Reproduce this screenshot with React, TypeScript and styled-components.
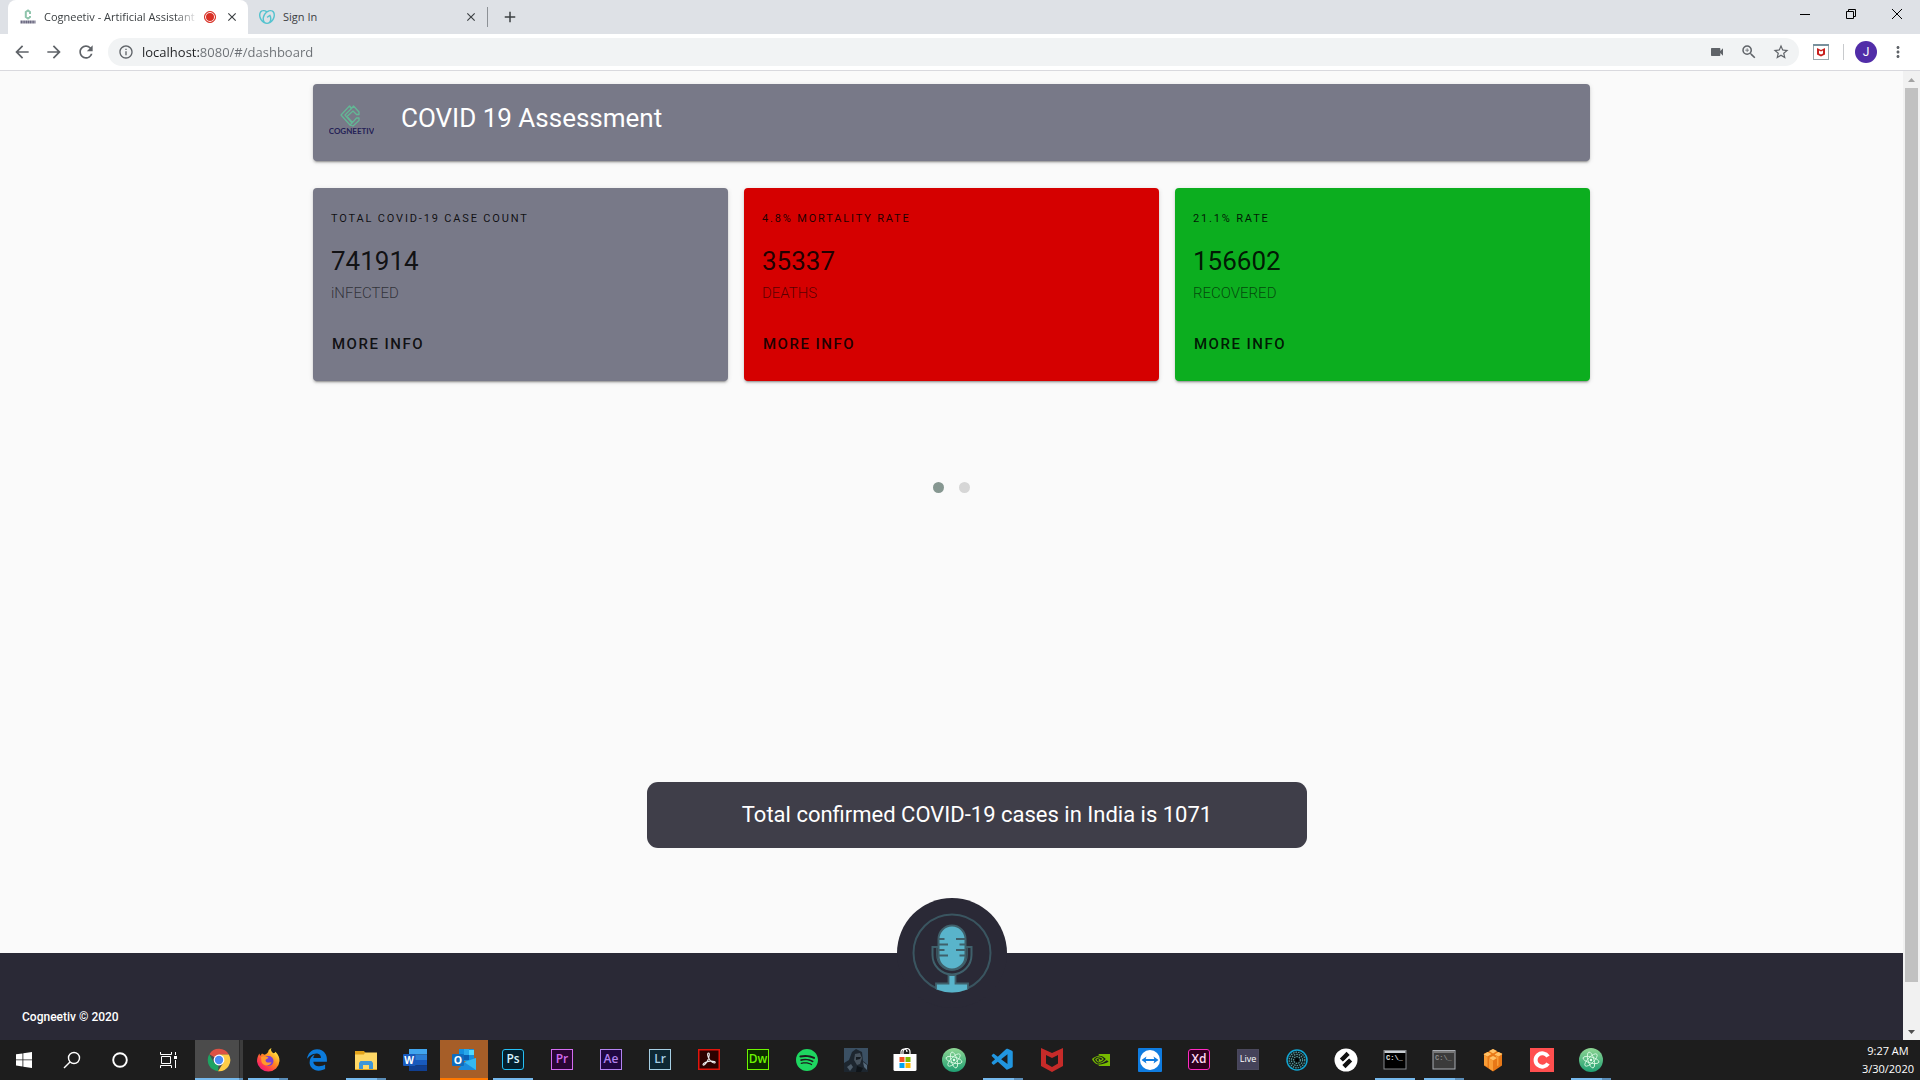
import React from "react";
import styled, { createGlobalStyle, css } from "styled-components";
import { SiGodaddy, SiSpotify, SiNvidia } from "react-icons/si";
import { VscVscode } from "react-icons/vsc";
import { FaEdgeLegacy } from "react-icons/fa";
import { MdArrowBack, MdArrowForward, MdRefresh, MdInfoOutline, MdVideocam, MdZoomIn, MdStarBorder, MdMoreVert, MdClose, MdAdd } from "react-icons/md";

const uiFont = `"Open Sans", "Noto Sans", sans-serif`;
const pageFont = `Roboto, "Liberation Sans", sans-serif`;

const GlobalStyle = createGlobalStyle`
  *, *::before, *::after { box-sizing: border-box; }
  body { margin: 0; background: #fafafa; font-family: ${pageFont}; }
  button, input { margin: 0; padding: 0; border: 0; background: none; font: inherit; color: inherit; }
  h1, p { margin: 0; font-weight: inherit; }
  svg { display: block; flex: none; }
`;

const Desktop = styled.div`
  display: flex;
  flex-direction: column;
  height: 100vh;
  overflow: hidden;
`;

/* ---------- browser chrome ---------- */

const TabStrip = styled.div`
  display: flex;
  align-items: center;
  height: 34px;
  padding-left: 8px;
  background: #dee1e6;
  font: 11px/16px ${uiFont};
  color: #3c4043;
`;

const Tab = styled.div<{ $active?: boolean }>`
  display: flex;
  align-items: center;
  width: ${(p) => (p.$active ? 240 : 239)}px;
  height: 34px;
  padding: 0 8px 0 ${(p) => (p.$active ? 12 : 11)}px;
  border-radius: 8px 8px 0 0;
  background: ${(p) => (p.$active ? "#fff" : "transparent")};
`;

const TabTitle = styled.span<{ $fade?: boolean }>`
  flex: 1;
  min-width: 0;
  margin: 0 6px 0 8px;
  overflow: hidden;
  white-space: nowrap;
  ${(p) =>
    p.$fade &&
    css`
      mask-image: linear-gradient(to right, #000 85%, transparent);
    `}
`;

const IconButton = styled.button<{ $w: number; $color?: string }>`
  display: flex;
  flex: none;
  align-items: center;
  justify-content: center;
  width: ${(p) => p.$w}px;
  height: 28px;
  color: ${(p) => p.$color ?? "#5f6368"};
`;

const RecordDot = styled.span`
  flex: none;
  width: 12px;
  height: 12px;
  margin-right: 8px;
  border: 1px solid #d93025;
  border-radius: 50%;
  background: #d93025;
  box-shadow: inset 0 0 0 1px #fff;
`;

const Divider = styled.span<{ $h: number; $color: string }>`
  flex: none;
  width: 1px;
  height: ${(p) => p.$h}px;
  background: ${(p) => p.$color};
`;

const WindowControls = styled.div`
  display: flex;
  margin-left: auto;
  padding-bottom: 6px;
`;

const Toolbar = styled.div`
  display: flex;
  flex: none;
  align-items: center;
  height: 37px;
  padding: 0 11px 0 6px;
  background: #fff;
  border-bottom: 1px solid #d9d9de;
`;

const Omnibox = styled.label`
  display: flex;
  flex: 1;
  align-items: center;
  height: 28px;
  margin: 0 6px;
  padding: 0 2px 0 10px;
  border-radius: 14px;
  background: #f1f3f4;
  color: #5f6368;
`;

const UrlInput = styled.input`
  flex: 1;
  min-width: 0;
  margin-left: 8px;
  font: 13px/20px ${uiFont};
  color: transparent;
  background: linear-gradient(to right, #202124 58px, #6b6f74 58px);
  background-clip: text;
  outline: none;
`;

const Avatar = styled.button`
  flex: none;
  width: 22px;
  height: 22px;
  margin: 0 10px 0 6px;
  border-radius: 50%;
  background: #512da8;
  color: #fff;
  font: 12px/22px ${pageFont};
  text-align: center;
`;

/* ---------- page ---------- */

const Viewport = styled.div`
  display: flex;
  flex: 1;
  min-height: 0;
`;

const Page = styled.div`
  display: flex;
  flex: 1;
  flex-direction: column;
  min-width: 0;
  background: #fafafa;
`;

const Container = styled.main`
  display: flex;
  flex: 1;
  flex-direction: column;
  width: 100%;
  max-width: 1277px;
  margin: 0 auto;
  padding-top: 13px;
`;

const Card = styled.section<{ $bg: string }>`
  border-radius: 4px;
  background: ${(p) => p.$bg};
  color: rgba(0, 0, 0, 0.87);
  box-shadow: 0 3px 1px -2px rgba(0, 0, 0, 0.2), 0 2px 2px 0 rgba(0, 0, 0, 0.14), 0 1px 5px 0 rgba(0, 0, 0, 0.12);
`;

const HeaderCard = styled(Card)`
  display: flex;
  align-items: flex-start;
  height: 77px;
  padding: 18px 16px 0;
`;

const Title = styled.h1`
  margin-left: 27px;
  font-size: 26px;
  font-weight: 400;
  line-height: 32px;
  color: #fff;
`;

const CardGrid = styled.div`
  display: grid;
  grid-template-columns: repeat(3, 1fr);
  gap: 16px;
  margin-top: 27px;
`;

const StatCard = styled(Card)`
  display: flex;
  flex-direction: column;
  align-items: flex-start;
  padding: 25px 18px 27px;
`;

const Overline = styled.p`
  font-size: 11px;
  line-height: 12px;
  letter-spacing: 0.1667em;
  text-transform: uppercase;
`;

const Count = styled.p`
  margin-top: 20px;
  font-size: 26px;
  font-weight: 400;
  line-height: 32px;
`;

const Caption = styled.p`
  margin-top: 6px;
  font-size: 15px;
  font-weight: 300;
  line-height: 20px;
  color: rgba(0, 0, 0, 0.6);
`;

const MoreInfo = styled.button`
  margin-top: 31px;
  padding-left: 1px;
  font-size: 15px;
  font-weight: 500;
  line-height: 20px;
  letter-spacing: 0.1em;
`;

const Dots = styled.nav`
  display: flex;
  justify-content: center;
  gap: 15px;
  margin-top: 101px;
`;

const Dot = styled.button<{ $active?: boolean }>`
  width: 11px;
  height: 11px;
  border-radius: 50%;
  background: ${(p) => (p.$active ? "#869791" : "#d6d6d6")};
`;

const Toast = styled.div`
  align-self: center;
  width: 660px;
  max-width: 100%;
  margin: auto 0 105px 51px;
  padding: 17px 24px;
  border-radius: 11px;
  background: #3f3e49;
  color: #fff;
  font-size: 22px;
  line-height: 32px;
  text-align: center;
`;

const Footer = styled.footer`
  position: relative;
  display: flex;
  align-items: flex-end;
  height: 87px;
  padding: 0 22px 14px;
  background: #2a2936;
  color: #fff;
  font-size: 12px;
  font-weight: 500;
  line-height: 18px;
`;

const MicButton = styled.button`
  position: absolute;
  top: -55px;
  left: calc(50% - 55px);
  width: 110px;
  height: 110px;
  border-radius: 50%;
  background: #2a2936;
`;

const ScrollBar = styled.div`
  display: flex;
  flex: none;
  flex-direction: column;
  align-items: center;
  justify-content: space-between;
  width: 17px;
  background: #f1f1f1;
`;

const ScrollThumb = styled.div`
  width: 13px;
  flex: 1;
  margin-bottom: 41px;
  background: #c1c1c1;
`;

const ScrollArrow = styled.div`
  display: flex;
  align-items: center;
  justify-content: center;
  height: 17px;
`;

/* ---------- taskbar ---------- */

const TaskBar = styled.div`
  display: flex;
  flex: none;
  height: 40px;
  background: #1d1d1d;
  color: #fff;
`;

const SystemButtons = styled.div`
  display: flex;
  margin-right: 3px;
`;

const Apps = styled.div`
  display: flex;
  gap: 1px;
`;

type AppState = "idle" | "open" | "stacked" | "current" | "alert";

const underline: Record<AppState, string> = {
  idle: "none",
  open: "linear-gradient(#76b9ed, #76b9ed) center bottom / 40px 2px no-repeat",
  stacked: "linear-gradient(to right, #76b9ed 31px, #5a8db8 31px) center bottom / 40px 2px no-repeat",
  current:
    "linear-gradient(to right, #76b9ed 44px, #5a8db8 44px) left bottom / 48px 2px no-repeat, linear-gradient(to right, #4b4b4b 44px, #2b2b2b 44px, #2b2b2b 45px, #3c3c3c 45px)",
  alert: "linear-gradient(#ff7800, #ff7800) left bottom / 48px 2px no-repeat, #a65e28",
};

const TaskButton = styled.button<{ $state?: AppState }>`
  display: flex;
  align-items: center;
  justify-content: center;
  width: 48px;
  height: 40px;
  background: ${(p) => underline[p.$state ?? "idle"]};
`;

const Tile = styled.span<{ $edge: string; $bg: string; $ink?: string; $size?: number; $weight?: number; $round?: number }>`
  width: 22px;
  height: 21px;
  margin-bottom: 2px;
  border: 1px solid ${(p) => p.$edge};
  border-radius: ${(p) => p.$round ?? 0}px;
  background: ${(p) => p.$bg};
  color: ${(p) => p.$ink ?? p.$edge};
  font: ${(p) => p.$weight ?? 600} ${(p) => p.$size ?? 12}px/18px ${uiFont};
  text-align: center;
`;

const Clock = styled.time`
  margin-left: auto;
  padding: 2px 6px 0;
  font: 11px/18px ${uiFont};
  text-align: center;
`;

/* ---------- drawings ---------- */

const LogoMark = () => (
  <svg width="45" height="37" viewBox="0 -1 45 37" aria-label="Cogneetiv">
    <g fill="none" stroke="#63b795" strokeWidth="1.300" strokeLinejoin="round">
      <path d="M22.500 5.500L20.500 3 12 12l9 10 2-2-7-8z" />
      <path d="M20.500 3l2 2.500L24.500 3l5.500 6v2.500h-2.500L24 8l-6 5.500 5.500 6L27.500 15H30v2.500L24 23l-3-1" />
    </g>
    <text x="22.500" y="31" textAnchor="middle" fontFamily="Lato, sans-serif" fontWeight="700" fontSize="8" fill="#252156">
      COGNEETIV
    </text>
  </svg>
);

const TabLogo = () => (
  <svg width="16" height="16" viewBox="0 0 16 16">
    <path d="M10 5V3L8 1.500 5.800 3v5L8 9.500 10 8V7" fill="none" stroke="#8fc4ac" strokeWidth="2" />
    <path d="M.5 13h15" stroke="#6a6880" strokeWidth="3" strokeDasharray="1.500 .3" />
  </svg>
);

const McAfeeShield = () => (
  <svg width="24" height="24" viewBox="0 0 24 24">
    <path d="M1 0l11 5 11-5v18l-11 6-11-6zM6 7v8.500l6 3.500 6-3.500V7l-6 3z" fill="#c62b29" fillRule="evenodd" />
  </svg>
);

const Microphone = () => (
  <svg width="110" height="110" viewBox="0 0 110 110">
    <defs>
      <clipPath id="micDisc">
        <circle cx="55" cy="55" r="39.500" />
      </clipPath>
    </defs>
    <circle cx="55" cy="55" r="38.500" fill="none" stroke="#3a5560" strokeWidth="2" />
    <g clipPath="url(#micDisc)" stroke="#3f606b">
      <path d="M41.500 49H35.500v8a19.500 19.500 0 0 0 39 0v-8H68.500" fill="none" strokeWidth="2" />
      <path d="M39.800 49v8a15.200 15.200 0 0 0 30.400 0v-8" fill="none" strokeWidth="1.200" />
      <rect x="41.500" y="27.500" width="27" height="44" rx="13.500" fill="#59b4cb" strokeWidth="2" />
      <path d="M42 41h5.500M42 46.500h9M42 52h5.500M42 57.500h9M68 41h-9M68 46.500h-5.500M68 52h-9M68 57.500h-5.500" strokeWidth="1.800" />
      <path d="M51.500 77h7v8.500H71V96H39V85.500h12.500z" fill="#59b4cb" strokeWidth="1.800" />
    </g>
  </svg>
);

const WindowsLogo = () => (
  <svg width="16" height="16" viewBox="0 0 16 16" fill="#fff">
    <path d="M0 2.300l6.500-.9v6.100H0zM7.300 1.300L16 0v7.500H7.300zM0 8.300h6.500v6.200L0 13.600zM7.300 8.300H16V16l-8.700-1.300z" />
  </svg>
);

const SearchGlass = () => (
  <svg width="18" height="18" viewBox="0 0 18 18" fill="none" stroke="#fff" strokeWidth="1.400">
    <circle cx="11" cy="7" r="5.500" />
    <path d="M7 11L1 17" />
  </svg>
);

const CortanaRing = () => (
  <svg width="16" height="16" viewBox="0 0 16 16">
    <circle cx="8" cy="8" r="6.800" fill="none" stroke="#fff" strokeWidth="1.900" />
  </svg>
);

const TaskView = () => (
  <svg width="17" height="16" viewBox="0 0 17 16" fill="none" stroke="#fff">
    <path d="M1.500 4.500h9v7h-9zM.5 0v2.500h11V0M.5 16v-2.500h11V16M15.500 0v3M15.500 8v8" />
    <path d="M14 4h3v3h-3z" fill="#fff" stroke="none" />
  </svg>
);

const Chrome = () => (
  <svg width="24" height="24" viewBox="0 0 24 24">
    <path d="M12 12L2.400 6.200A11.200 11.200 0 0 1 21.800 6.500H12z" fill="#dd5144" />
    <path d="M12 12l-1 11.200A11.200 11.200 0 0 1 2.300 6.300L7.200 15z" fill="#1ea362" />
    <path d="M12 6.500h9.800A11.200 11.200 0 0 1 11 23.200l5.500-8.700z" fill="#ffcd46" />
    <circle cx="12" cy="12" r="5.400" fill="#fff" />
    <circle cx="12" cy="12" r="4.200" fill="#4c8bf5" />
  </svg>
);

const Firefox = () => (
  <svg width="24" height="24" viewBox="0 0 24 24">
    <defs>
      <linearGradient id="fox" x1="1" y1="0" x2="0.200" y2="1">
        <stop offset="0.150" stopColor="#ffe944" />
        <stop offset="0.500" stopColor="#ff8a1f" />
        <stop offset="0.800" stopColor="#ff3750" />
        <stop offset="1" stopColor="#e31587" />
      </linearGradient>
    </defs>
    <path d="M15.500 0c-1 2-.5 3.200 1.500 5 1 .5 2-.2 2.500-1.200 3 3 4 6 4 9.200A11.300 11.300 0 0 1 1 13.500C1 10 2 7.500 3.500 5.500L4 8l2-2.500 2.500 1.200C11 6 12.500 4 12.500 2.500c1-1 1.800-2 3-2.500z" fill="url(#fox)" />
    <circle cx="12.500" cy="13" r="5" fill="#7a3fd0" />
    <path d="M5 9c3-1.500 5 0 7.500.5-1 1.500-3 1.500-3 3 .5 2.500 4 2.500 6 1.500-1 4-8 5-10 0z" fill="#ff9a2b" />
  </svg>
);

const Folder = () => (
  <svg width="22" height="19" viewBox="0 0 22 19">
    <path d="M0 0h9l1.500 2H22v17H0z" fill="#e3a31a" />
    <path d="M0 3.500h9l1-2h12V18H0z" fill="#ffd866" />
    <path d="M4 18v-6l1.500-2h11l1.500 2v6h-4v-4H8v4z" fill="#3f96d8" />
  </svg>
);

const Word = () => (
  <svg width="24" height="22" viewBox="0 0 24 22">
    <path d="M6 0h18v5.500H6z" fill="#41a5ee" />
    <path d="M6 5.500h18V11H6z" fill="#2b7cd3" />
    <path d="M6 11h18v5.500H6z" fill="#185abd" />
    <path d="M6 16.500h18V22H6z" fill="#103f91" />
    <rect x="0" y="5" width="12.500" height="12" rx="1" fill="#185abd" />
    <text x="6.200" y="14.800" textAnchor="middle" fontFamily="Open Sans, sans-serif" fontWeight="700" fontSize="10" fill="#fff">W</text>
  </svg>
);

const Outlook = () => (
  <svg width="24" height="22" viewBox="0 0 24 22">
    <path d="M7 0h15v12H7z" fill="#1490df" />
    <path d="M12 0h5v6h-5z" fill="#28a8ea" />
    <path d="M17 1h5v5h-5z" fill="#50d9ff" />
    <path d="M12 6h5v5h-5z" fill="#0a5fb4" />
    <path d="M6 20l7-7 11-4v12H7z" fill="#1a8bdc" />
    <path d="M24 9v12L12 13z" fill="#35b8f1" />
    <rect x="0" y="5" width="12" height="12" rx="1" fill="#0f6cbd" />
    <text x="6" y="14.800" textAnchor="middle" fontFamily="Open Sans, sans-serif" fontWeight="700" fontSize="10.500" fill="#fff">O</text>
  </svg>
);

const AcrobatTile = styled.svg`
  margin-bottom: 2px;
`;

const Acrobat = () => (
  <AcrobatTile width="22" height="21" viewBox="0 0 22 21">
    <rect x=".75" y=".75" width="20.500" height="19.500" fill="#2d0200" stroke="#e1150c" strokeWidth="1.500" />
    <path d="M10.500 4c-1.500 0-1 3.500 1 6.500 1.500 2.500 4.500 4 5.500 3.300 1-1-1.500-2-5-1.700-3.500.3-7 2-7 3.400 0 1.800 3-.5 4.700-4 1.500-3.300 2.300-7.500.8-7.500z" fill="none" stroke="#eee" strokeWidth="1.100" />
  </AcrobatTile>
);

const Portrait = () => (
  <svg width="24" height="24" viewBox="0 0 24 24">
    <rect width="24" height="24" fill="#3b5063" />
    <path d="M0 24V15l5-3 3-8 4-3 6 3 1 9 5 4v7z" fill="#1d262f" />
    <path d="M11 6l5-1 2 5-2 6-3 1-3-5z" fill="#46525d" />
    <path d="M12 9h5l-1 2-4 1z" fill="#161c22" />
    <path d="M3 19l4-3 2 3-3 4z" fill="#4d5c69" />
    <path d="M13 18l6 2-2 4h-5z" fill="#0f1419" />
    <path d="M19 14l4 3v5l-3-3z" fill="#54697b" />
  </svg>
);

const Store = () => (
  <svg width="24" height="24" viewBox="0 0 24 24">
    <path d="M8 6V4a3 3 0 0 1 6 0M10 6V4a3.500 3.500 0 0 1 7 0v2" fill="none" stroke="#fff" strokeWidth="1.200" />
    <path d="M.5 6h23v15.500a1.500 1.500 0 0 1-1.500 1.500H2a1.500 1.500 0 0 1-1.500-1.500z" fill="#fff" />
    <path d="M6.500 9h5v5h-5z" fill="#f25022" />
    <path d="M12.500 9h5v5h-5z" fill="#7fba00" />
    <path d="M6.500 15h5v5h-5z" fill="#00a4ef" />
    <path d="M12.500 15h5v5h-5z" fill="#ffb900" />
  </svg>
);

const Atom = () => (
  <svg width="24" height="24" viewBox="0 0 24 24">
    <defs>
      <linearGradient id="atomDisc" x1="0" y1="0" x2="0" y2="1">
        <stop offset="0" stopColor="#8fd694" />
        <stop offset="1" stopColor="#1f9f72" />
      </linearGradient>
    </defs>
    <circle cx="12" cy="12" r="12" fill="url(#atomDisc)" />
    <g fill="none" stroke="#d5f7e0" strokeWidth=".9">
      <ellipse cx="12" cy="12" rx="8.200" ry="3" transform="rotate(15 12 12)" />
      <ellipse cx="12" cy="12" rx="8.200" ry="3" transform="rotate(75 12 12)" />
      <ellipse cx="12" cy="12" rx="8.200" ry="3" transform="rotate(135 12 12)" />
    </g>
    <circle cx="12" cy="12" r="1.200" fill="#e6fff0" />
  </svg>
);

const TeamViewer = () => (
  <svg width="24" height="24" viewBox="0 0 24 24">
    <rect width="24" height="24" rx="1" fill="#0f7ce0" />
    <circle cx="12" cy="12" r="10" fill="#fff" />
    <path d="M3.500 12l5-3.500-.8 2.500h8.600l-.8-2.500 5 3.500-5 3.500.8-2.500H7.700l.8 2.500z" fill="#0f7ce0" />
  </svg>
);

const Vortex = () => (
  <svg width="22" height="22" viewBox="0 0 22 22">
    <circle cx="11" cy="11" r="10" fill="#0b1719" stroke="#12a5d2" strokeWidth="1.500" />
    <g fill="none" stroke="#5e9a9c" strokeWidth="1.200" strokeDasharray="1.500 1">
      <circle cx="11" cy="11" r="7.800" />
      <circle cx="11" cy="11" r="5.600" />
      <circle cx="11" cy="11" r="3.400" />
    </g>
    <circle cx="11" cy="11" r="1.800" fill="#000" />
  </svg>
);

const SplitDisc = () => (
  <svg width="24" height="24" viewBox="0 0 24 24">
    <circle cx="12" cy="12" r="11.500" fill="#fff" />
    <path d="M9 10.500l3.500-3.500M11.500 17l3.500-3.500" stroke="#111" strokeWidth="4.500" strokeLinecap="square" />
    <path d="M8.500 14l7-4" stroke="#fff" strokeWidth=".8" />
  </svg>
);

const Terminal = ({ dim }: { dim?: boolean }) => (
  <svg width="24" height="20" viewBox="0 0 24 20">
    <rect x="1" y=".5" width="22" height="18.500" fill={dim ? "#3b3b3b" : "#000"} stroke={dim ? "#a9adb3" : "#85888c"} />
    <path d={dim ? "M2 2h20" : "M1.500 2h21"} stroke={dim ? "#777" : "#c9ced3"} strokeWidth="2" />
    <text x="3" y="9.500" fontFamily="Liberation Mono, monospace" fontWeight="700" fontSize="7" fill={dim ? "#8c8c8c" : "#e8e8e8"}>
      C:\_
    </text>
  </svg>
);

const Boxes = () => (
  <svg width="22" height="24" viewBox="0 0 22 24">
    <path d="M11 1l4 2.500 5 2v12l-9 6-9-6v-12l5-2z" fill="#e87817" />
    <path d="M11 1l4 2-4 2.500L7 3zM5.500 4l4 2-4 2.500-4-2zM16.500 4l4 2-4 2.500-4-2zM11 8l4 2-4 2.500L7 10z" fill="#ffc267" />
    <path d="M2 7l3.500 2v10L2 17zM7 10.500l4 2V23l-4-2.500zM13 7l3.500 2v8.500L15 18v-8z" fill="#f99d36" />
  </svg>
);

const Camtasia = () => (
  <svg width="24" height="24" viewBox="0 0 24 24">
    <rect width="24" height="24" fill="#ff4f4f" />
    <path d="M18 8.500A6.700 6.700 0 1 0 18 15.500" fill="none" stroke="#fff" strokeWidth="4" />
  </svg>
);

const apps: { name: string; state?: AppState; icon: React.ReactNode }[] = [
  { name: "Chrome", state: "current", icon: <Chrome /> },
  { name: "Firefox", state: "stacked", icon: <Firefox /> },
  { name: "Edge", icon: <FaEdgeLegacy size={22} color="#0c7bdb" /> },
  { name: "File Explorer", state: "stacked", icon: <Folder /> },
  { name: "Word", icon: <Word /> },
  { name: "Outlook", state: "alert", icon: <Outlook /> },
  { name: "Photoshop", state: "open", icon: <Tile $edge="#26c0f4" $bg="#04202e" $ink="#d8f4ff" $round={3}>Ps</Tile> },
  { name: "Premiere", icon: <Tile $edge="#d36cf0" $bg="#2a0634">Pr</Tile> },
  { name: "After Effects", icon: <Tile $edge="#b383f0" $bg="#1f0740">Ae</Tile> },
  { name: "Lightroom", icon: <Tile $edge="#a6cfe4" $bg="#0e2733">Lr</Tile> },
  { name: "Acrobat", icon: <Acrobat /> },
  { name: "Dreamweaver", icon: <Tile $edge="#6cf500" $bg="#0c2b00">Dw</Tile> },
  { name: "Spotify", icon: <SiSpotify size={22} color="#1ed760" /> },
  { name: "Game", icon: <Portrait /> },
  { name: "Store", icon: <Store /> },
  { name: "Atom", icon: <Atom /> },
  { name: "Visual Studio Code", state: "stacked", icon: <VscVscode size={26} color="#2196e0" /> },
  { name: "McAfee", icon: <McAfeeShield /> },
  { name: "NVIDIA", icon: <SiNvidia size={18} color="#76b900" /> },
  { name: "TeamViewer", icon: <TeamViewer /> },
  { name: "XD", icon: <Tile $edge="#ff2bc2" $bg="#2e001e" $ink="#ffd9f4" $round={3}>Xd</Tile> },
  { name: "Live", icon: <Tile $edge="#4a485c" $bg="#45435a" $ink="#fff" $size={9} $weight={400}>Live</Tile> },
  { name: "Vortex", icon: <Vortex /> },
  { name: "Splice", icon: <SplitDisc /> },
  { name: "Command Prompt", state: "open", icon: <Terminal /> },
  { name: "Terminal", state: "stacked", icon: <Terminal dim /> },
  { name: "Boxes", icon: <Boxes /> },
  { name: "Camtasia", icon: <Camtasia /> },
  { name: "Atom Beta", state: "stacked", icon: <Atom /> },
];

const stats = [
  { bg: "#787988", overline: "Total COVID-19 Case Count", count: "741914", caption: "iNFECTED" },
  { bg: "#d50000", overline: "4.8% Mortality Rate", count: "35337", caption: "DEATHS" },
  { bg: "#0cae1f", overline: "21.1% Rate", count: "156602", caption: "RECOVERED" },
];

export default function App() {
  return (
    <Desktop>
      <GlobalStyle />
      <TabStrip>
        <Tab $active>
          <TabLogo />
          <TabTitle $fade>Cogneetiv - Artificial Assistant</TabTitle>
          <RecordDot />
          <IconButton $w={16} $color="#3c4043" aria-label="Close tab">
            <MdClose size={14} />
          </IconButton>
        </Tab>
        <Tab>
          <SiGodaddy size={16} color="#55c3cf" />
          <TabTitle>Sign In</TabTitle>
          <IconButton $w={16} $color="#3c4043" aria-label="Close tab">
            <MdClose size={14} />
          </IconButton>
        </Tab>
        <Divider $h={20} $color="#8d9196" />
        <IconButton $w={44} $color="#3c4043" aria-label="New tab">
          <MdAdd size={18} />
        </IconButton>
        <WindowControls>
          <IconButton $w={46} $color="#000" aria-label="Minimize">
            <svg width="10" height="10" viewBox="0 0 10 10" stroke="currentColor"><path d="M0 5.500h10" /></svg>
          </IconButton>
          <IconButton $w={46} $color="#000" aria-label="Restore">
            <svg width="10" height="10" viewBox="0 0 10 10" fill="none" stroke="currentColor"><path d="M.5 2.500h7v7h-7zM2.500 2.500v-2h7v7h-2" /></svg>
          </IconButton>
          <IconButton $w={46} $color="#000" aria-label="Close">
            <svg width="10" height="10" viewBox="0 0 10 10" stroke="currentColor"><path d="M0 0l10 10M10 0L0 10" /></svg>
          </IconButton>
        </WindowControls>
      </TabStrip>

      <Toolbar>
        <IconButton $w={32} aria-label="Back"><MdArrowBack size={20} /></IconButton>
        <IconButton $w={32} aria-label="Forward"><MdArrowForward size={20} /></IconButton>
        <IconButton $w={32} aria-label="Reload"><MdRefresh size={20} /></IconButton>
        <Omnibox>
          <MdInfoOutline size={16} />
          <UrlInput aria-label="Address" defaultValue="localhost:8080/#/dashboard" />
          <IconButton $w={32} type="button" aria-label="Camera"><MdVideocam size={16} /></IconButton>
          <IconButton $w={32} type="button" aria-label="Zoom"><MdZoomIn size={18} /></IconButton>
          <IconButton $w={32} type="button" aria-label="Bookmark"><MdStarBorder size={18} /></IconButton>
        </Omnibox>
        <IconButton $w={32} aria-label="McAfee WebAdvisor">
          <svg width="16" height="16" viewBox="0 0 16 16">
            <rect x=".5" y=".5" width="15" height="15" fill="#fff" stroke="#9aa7ad" />
            <path d="M0 1h16" stroke="#78909c" strokeWidth="2" />
            <path d="M4 4l4 2 4-2v6.500L8 12.500l-4-2zM6 6.500v3l2 1 2-1v-3L8 7.500z" fill="#c8201e" fillRule="evenodd" />
          </svg>
        </IconButton>
        <IconButton as="span" $w={12}><Divider $h={16} $color="#c8cacd" /></IconButton>
        <Avatar aria-label="Profile">J</Avatar>
        <IconButton $w={22} aria-label="Menu"><MdMoreVert size={18} /></IconButton>
      </Toolbar>

      <Viewport>
        <Page>
          <Container>
            <HeaderCard $bg="#787988">
              <LogoMark />
              <Title>COVID 19 Assessment</Title>
            </HeaderCard>
            <CardGrid>
              {stats.map((s) => (
                <StatCard key={s.caption} $bg={s.bg}>
                  <Overline>{s.overline}</Overline>
                  <Count>{s.count}</Count>
                  <Caption>{s.caption}</Caption>
                  <MoreInfo>MORE INFO</MoreInfo>
                </StatCard>
              ))}
            </CardGrid>
            <Dots aria-label="Slides">
              <Dot $active aria-label="Slide 1" />
              <Dot aria-label="Slide 2" />
            </Dots>
            <Toast role="status">Total confirmed COVID-19 cases in India is 1071</Toast>
          </Container>
          <Footer>
            <p>Cogneetiv © 2020</p>
            <MicButton aria-label="Speak">
              <Microphone />
            </MicButton>
          </Footer>
        </Page>
        <ScrollBar>
          <ScrollArrow>
            <svg width="7" height="4" viewBox="0 0 7 4"><path d="M0 4h7L3.500 0z" fill="#a3a3a3" /></svg>
          </ScrollArrow>
          <ScrollThumb />
          <ScrollArrow>
            <svg width="7" height="4" viewBox="0 0 7 4"><path d="M0 0h7L3.500 4z" fill="#505050" /></svg>
          </ScrollArrow>
        </ScrollBar>
      </Viewport>

      <TaskBar>
        <SystemButtons>
          <TaskButton aria-label="Start"><WindowsLogo /></TaskButton>
          <TaskButton aria-label="Search"><SearchGlass /></TaskButton>
          <TaskButton aria-label="Cortana"><CortanaRing /></TaskButton>
          <TaskButton aria-label="Task view"><TaskView /></TaskButton>
        </SystemButtons>
        <Apps>
          {apps.map((a) => (
            <TaskButton key={a.name} $state={a.state} aria-label={a.name}>
              {a.icon}
            </TaskButton>
          ))}
        </Apps>
        <Clock>
          9:27 AM
          <br />
          3/30/2020
        </Clock>
      </TaskBar>
    </Desktop>
  );
}
